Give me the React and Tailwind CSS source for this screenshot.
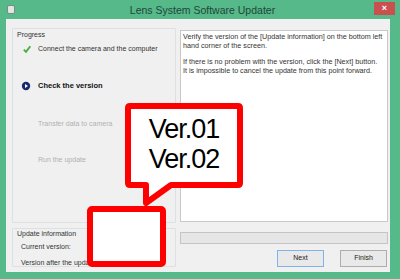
export default function App() {
  const ui = { fontFamily: '"Liberation Sans", Arial, sans-serif' };
  return (
    <div className="relative w-[400px] h-[279px] bg-[#55b98a] flex flex-col overflow-hidden" style={ui}>
      {/* title bar */}
      <div className="relative h-[19px] flex items-center shrink-0">
        <div className="ml-[7px] w-[8px] h-[9px] rounded-[2px] bg-[#dfe7e2] border border-[#7d8a84]" />
        <div className="flex-1 text-center text-[10.5px] text-[#23463a] pr-[10px] pt-[3px]">Lens System Software Updater</div>
        <div className="absolute right-[5px] top-[2px] w-[21px] h-[13px] bg-[#c9504f] flex items-center justify-center text-white text-[9px] font-bold leading-none">×</div>
      </div>
      {/* client */}
      <div className="ml-[6px] mr-[10px] h-[253px] bg-[#f0f0f0] flex pl-[6px] pt-[9px] pb-[5px] text-[7px]">
        {/* left column */}
        <div className="w-[164px] flex flex-col gap-[5px]">
          <div className="h-[195px] border border-[#dbe0e3] rounded-[1px] flex flex-col px-[4px] pt-[1px]">
            <div className="text-[#333] leading-[9px]">Progress</div>
            <div className="flex items-center h-[12px] mt-[4px]">
              <svg width="10" height="10" viewBox="0 0 10 10" className="ml-[5px]">
                <path d="M1.8 5.6 L4 7.8 L8.3 2.3" fill="none" stroke="#3fae3a" strokeWidth="1.8" />
              </svg>
              <span className="ml-[6px] text-[#333]">Connect the camera and the computer</span>
            </div>
            <div className="flex items-center h-[12px] mt-[25px]">
              <svg width="10" height="10" viewBox="0 0 10 10" className="ml-[4px]">
                <circle cx="5" cy="5" r="4.2" fill="#1c2a6b" />
                <path d="M4 3 L7 5 L4 7 Z" fill="#fff" />
              </svg>
              <span className="ml-[7px] font-bold text-[#111] text-[7.5px]">Check the version</span>
            </div>
            <div className="flex items-center h-[12px] mt-[26px] pl-[21px] text-[#b0b0b0]">Transfer data to camera</div>
            <div className="flex items-center h-[12px] mt-[24px] pl-[21px] text-[#b0b0b0]">Run the update</div>
          </div>
          <div className="h-[39px] border border-[#dbe0e3] rounded-[1px] flex flex-col px-[4px] pt-[0px] leading-[9px] text-[#333]">
            <div>Update information</div>
            <div className="ml-[4px] mt-[4px]">Current version:</div>
            <div className="ml-[4px] mt-[7px]">Version after the update:</div>
          </div>
        </div>
        {/* right column */}
        <div className="ml-[4px] w-[208px] flex flex-col pt-[2px]">
          <div className="h-[192px] bg-white border border-[#c9c9c9] px-[2px] pt-[1px] leading-[9px] text-[7.2px] text-[#333] whitespace-nowrap overflow-hidden">
            <div>Verify the version of the [Update information] on the bottom left</div>
            <div>hand corner of the screen.</div>
            <div className="mt-[7px]">If there is no problem with the version, click the [Next] button.</div>
            <div>It is impossible to cancel the update from this point forward.</div>
          </div>
          <div className="mt-[10px] h-[12px] bg-[#e6e6e6] border border-[#c4c4c4]" />
          <div className="mt-[6px] flex justify-end gap-[16px] pr-[1px]">
            <div className="w-[47px] h-[17px] bg-[#e9e9e9] border border-[#7eb4ea] flex items-center justify-center text-[#222]">Next</div>
            <div className="w-[47px] h-[17px] bg-[#e9e9e9] border border-[#adadad] flex items-center justify-center text-[#222]">Finish</div>
          </div>
        </div>
      </div>
      {/* callout overlay */}
      <svg className="absolute left-0 top-0" width="400" height="279" viewBox="0 0 400 279">
        <path d="M130 106 H238 Q240 106 240 108 V183 Q240 185 238 185 H171 L146 203 V185 H130 Q128 185 128 183 V108 Q128 106 130 106 Z" fill="#fff" stroke="#ff0000" strokeWidth="6" strokeLinejoin="round" />
        <rect x="90" y="209" width="73" height="55" rx="2" fill="#fff" stroke="#ff0000" strokeWidth="6" />
      </svg>
      <div className="absolute left-[128px] top-[114px] w-[112px] flex flex-col items-center text-black text-[27px] leading-[30px] tracking-[-1px]" style={{ fontFamily: '"Liberation Sans", Arial, sans-serif' }}>
        <div>Ver.01</div>
        <div>Ver.02</div>
      </div>
    </div>
  );
}
